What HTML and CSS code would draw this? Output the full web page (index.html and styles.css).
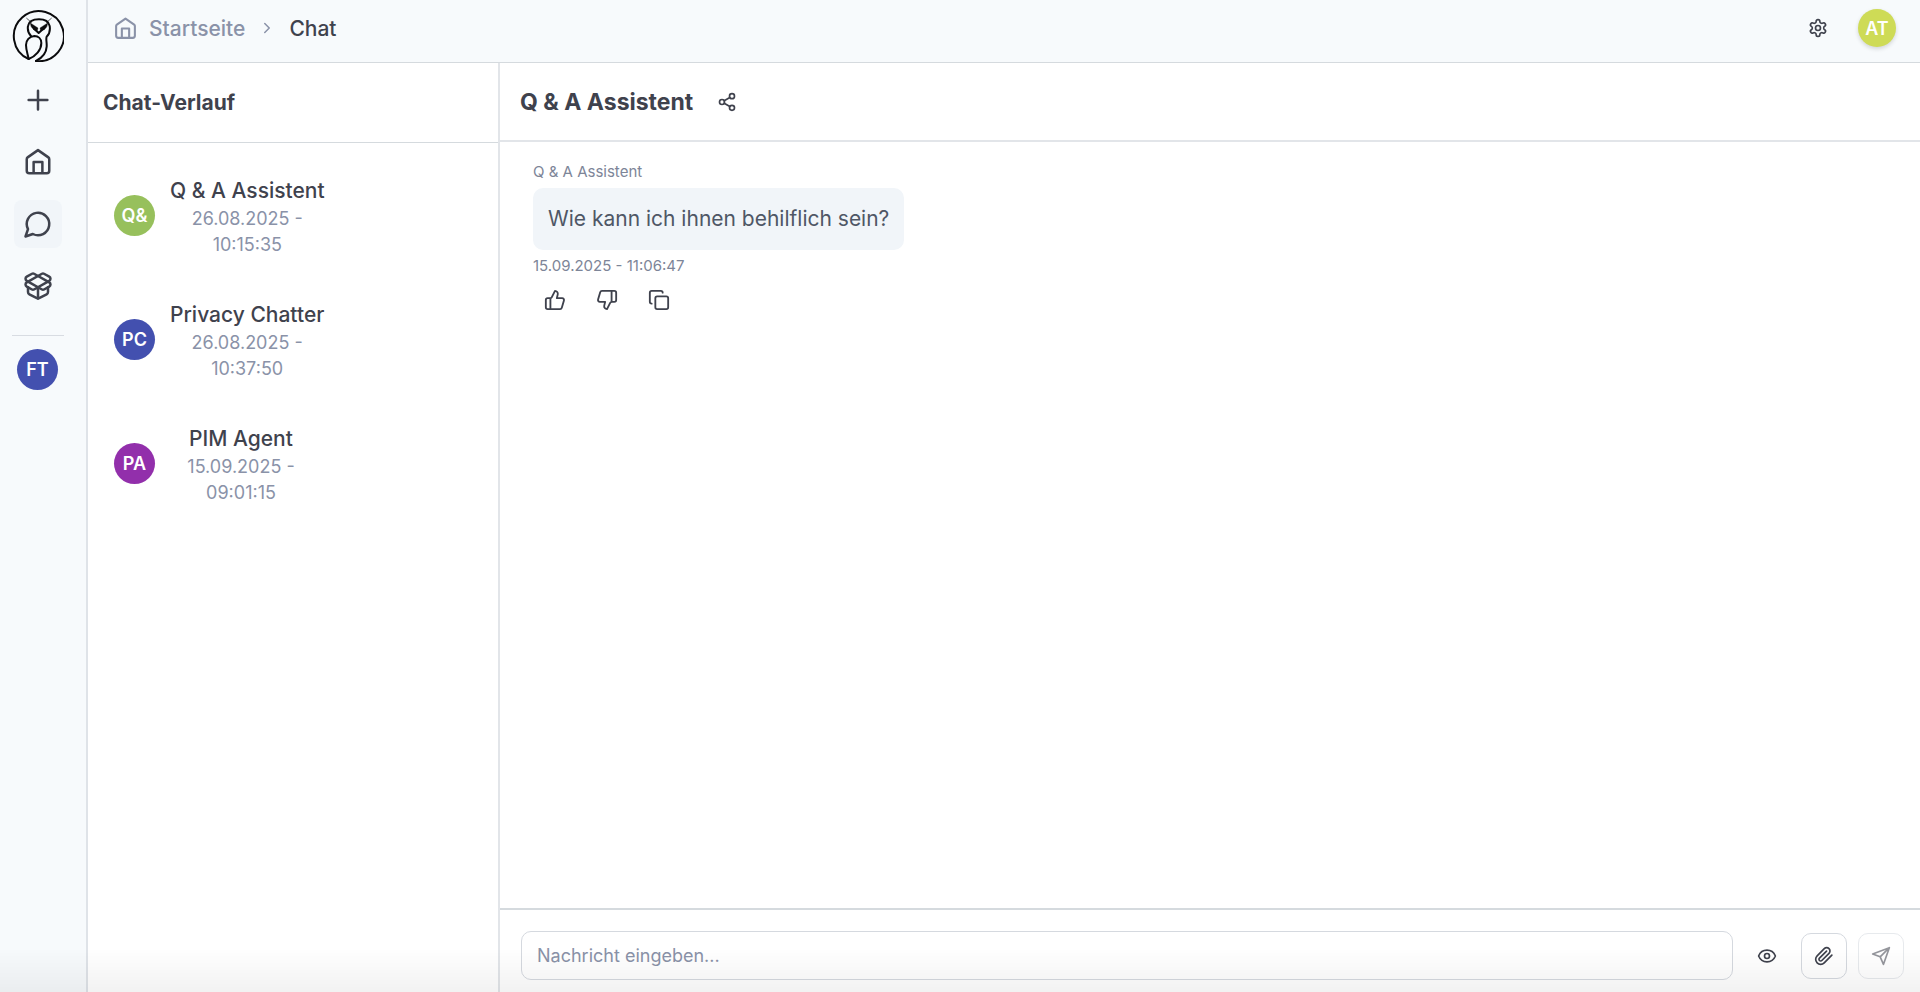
FILE: index.html
```html
<!DOCTYPE html>
<html lang="de">
<head>
    <meta charset="UTF-8">
    <meta name="viewport" content="width=device-width, initial-scale=1.0">
    <title>Chat</title>
    <link rel="stylesheet" href="styles.css">
</head>
<body>
    <nav class="sidebar">
        <a href="#" class="logo" aria-label="Start">
            <svg viewBox="0 0 156 156" fill="none" stroke="#0b0b0d" stroke-width="6" stroke-linecap="round" stroke-linejoin="round">
                <path d="M50 147A75 75 0 1 1 72 153"/>
                <path d="M72 153C92 143 103 128 104 110C105 97 101 88 104 80C112 72 115 60 113 48C110 34 98 28 81 28C64 28 50 34 48 48C46 60 49 70 57 78"/>
                <path d="M67 78C52 79 42 91 42 105C42 121 48 134 50 147C71 139 88 120 88 99C88 86 79 78 67 78Z"/>
                <path d="M66 56L80 69L94 56"/>
                <path d="M44 25L58 37M118 25L104 37" stroke-width="2"/>
                <path d="M54 38L78 54L76 62L65 59L58 51ZM108 38L84 54L86 62L97 59L104 51Z" fill="#0b0b0d" stroke-width="1"/>
            </svg>
        </a>
        <div class="menu">
            <button class="menu-button" aria-label="Neu">
                <svg class="icon" viewBox="0 0 24 24"><path d="M4.500 12h15M12 4.500v15"/></svg>
            </button>
            <button class="menu-button" aria-label="Startseite">
                <svg class="icon" viewBox="0 0 24 24"><path d="M12 2.500L3.700 8.300a1.700 1.700 0 0 0-.7 1.400V19a2 2 0 0 0 2 2h14a2 2 0 0 0 2-2V9.700a1.700 1.700 0 0 0-.7-1.400zM8.500 21v-9h7v9"/></svg>
            </button>
            <button class="menu-button active" aria-label="Chat">
                <svg class="icon" viewBox="0 0 24 24"><path d="M7.900 20A9 9 0 1 0 4 16.100L2 22Z"/></svg>
            </button>
            <button class="menu-button" aria-label="Pakete">
                <svg class="icon" viewBox="0 0 24 24"><path d="M12 22v-9M15.170 2.210a1.670 1.670 0 0 1 1.630 0L21 4.570a1.930 1.930 0 0 1 0 3.360L8.820 14.790a1.655 1.655 0 0 1-1.640 0L3 12.430a1.930 1.930 0 0 1 0-3.360z"/><path d="M20 13v3.870a2.060 2.060 0 0 1-1.110 1.830l-6 3.080a1.930 1.930 0 0 1-1.780 0l-6-3.080A2.060 2.060 0 0 1 4 16.870V13"/><path d="M21 12.430a1.930 1.930 0 0 0 0-3.360L8.830 2.200a1.640 1.640 0 0 0-1.630 0L3 4.570a1.930 1.930 0 0 0 0 3.360l12.180 6.860a1.636 1.636 0 0 0 1.630 0z"/></svg>
            </button>
        </div>
        <hr class="divider">
        <button class="avatar indigo">FT</button>
    </nav>

    <div class="page">
        <header class="topbar">
            <div class="breadcrumb">
                <a href="#" class="crumb">
                    <svg class="icon" viewBox="0 0 24 24"><path d="M12 2.500L3.700 8.300a1.700 1.700 0 0 0-.7 1.400V19a2 2 0 0 0 2 2h14a2 2 0 0 0 2-2V9.700a1.700 1.700 0 0 0-.7-1.400zM8.500 21v-9h7v9"/></svg>
                    <span>Startseite</span>
                </a>
                <svg class="icon chevron" viewBox="0 0 24 24"><path d="M9 18l6-6-6-6"/></svg>
                <span class="current">Chat</span>
            </div>
            <div class="account">
                <button class="icon-button" aria-label="Einstellungen">
                    <svg class="icon" viewBox="0 0 24 24"><path d="M12.220 2h-.44a2 2 0 0 0-2 2v.18a2 2 0 0 1-1 1.730l-.43.25a2 2 0 0 1-2 0l-.15-.08a2 2 0 0 0-2.730.73l-.22.38a2 2 0 0 0 .73 2.730l.15.1a2 2 0 0 1 1 1.720v.51a2 2 0 0 1-1 1.740l-.15.09a2 2 0 0 0-.73 2.730l.22.38a2 2 0 0 0 2.730.73l.15-.08a2 2 0 0 1 2 0l.43.25a2 2 0 0 1 1 1.730V20a2 2 0 0 0 2 2h.44a2 2 0 0 0 2-2v-.18a2 2 0 0 1 1-1.730l.43-.25a2 2 0 0 1 2 0l.15.08a2 2 0 0 0 2.730-.73l.22-.39a2 2 0 0 0-.73-2.730l-.15-.08a2 2 0 0 1-1-1.740v-.5a2 2 0 0 1 1-1.740l.15-.09a2 2 0 0 0 .73-2.730l-.22-.38a2 2 0 0 0-2.730-.73l-.15.08a2 2 0 0 1-2 0l-.43-.25a2 2 0 0 1-1-1.730V4a2 2 0 0 0-2-2z"/><circle cx="12" cy="12" r="3"/></svg>
                </button>
                <button class="avatar lime">AT</button>
            </div>
        </header>

        <div class="content">
            <aside class="history">
                <h2 class="history-title">Chat-Verlauf</h2>
                <div class="history-list">
                    <button class="history-item">
                        <span class="avatar green">Q&amp;</span>
                        <span class="history-text">
                            <span class="name">Q &amp; A Assistent</span>
                            <span class="date">26.08.2025 - 10:15:35</span>
                        </span>
                    </button>
                    <button class="history-item">
                        <span class="avatar indigo">PC</span>
                        <span class="history-text">
                            <span class="name">Privacy Chatter</span>
                            <span class="date">26.08.2025 - 10:37:50</span>
                        </span>
                    </button>
                    <button class="history-item">
                        <span class="avatar purple">PA</span>
                        <span class="history-text">
                            <span class="name">PIM Agent</span>
                            <span class="date">15.09.2025 - 09:01:15</span>
                        </span>
                    </button>
                </div>
            </aside>

            <main class="chat">
                <div class="chat-header">
                    <h1>Q &amp; A Assistent</h1>
                    <button class="icon-button" aria-label="Teilen">
                        <svg class="icon" viewBox="0 0 24 24"><circle cx="18" cy="5" r="3"/><circle cx="6" cy="12" r="3"/><circle cx="18" cy="19" r="3"/><path d="M8.590 13.510l6.830 3.980M15.410 6.510l-6.820 3.980"/></svg>
                    </button>
                </div>

                <div class="messages">
                    <div class="message">
                        <span class="meta">Q &amp; A Assistent</span>
                        <p class="bubble">Wie kann ich ihnen behilflich sein?</p>
                        <span class="meta">15.09.2025 - 11:06:47</span>
                        <div class="actions">
                            <button class="icon-button" aria-label="Gefällt mir">
                                <svg class="icon" viewBox="0 0 24 24"><path d="M7 10v12M15 5.880L14 10h5.830a2 2 0 0 1 1.920 2.560l-2.330 8A2 2 0 0 1 17.500 22H4a2 2 0 0 1-2-2v-8a2 2 0 0 1 2-2h2.760a2 2 0 0 0 1.790-1.110L12 2a3.130 3.130 0 0 1 3 3.880Z"/></svg>
                            </button>
                            <button class="icon-button" aria-label="Gefällt mir nicht">
                                <svg class="icon" viewBox="0 0 24 24"><path d="M17 14V2M9 18.120L10 14H4.170a2 2 0 0 1-1.920-2.560l2.330-8A2 2 0 0 1 6.500 2H20a2 2 0 0 1 2 2v8a2 2 0 0 1-2 2h-2.760a2 2 0 0 0-1.790 1.110L12 22a3.130 3.130 0 0 1-3-3.880Z"/></svg>
                            </button>
                            <button class="icon-button" aria-label="Kopieren">
                                <svg class="icon" viewBox="0 0 24 24"><rect x="8" y="8" width="14" height="14" rx="2"/><path d="M4 16c-1.100 0-2-.9-2-2V4c0-1.100.9-2 2-2h10c1.100 0 2 .9 2 2"/></svg>
                            </button>
                        </div>
                    </div>
                </div>

                <form class="composer">
                    <input type="text" class="message-input" placeholder="Nachricht eingeben..." aria-label="Nachricht eingeben">
                    <button type="button" class="tool-button plain" aria-label="Vorschau">
                        <svg class="icon" viewBox="0 0 24 24"><path d="M2.060 12.350a1 1 0 0 1 0-.7 10.750 10.750 0 0 1 19.880 0 1 1 0 0 1 0 .7 10.750 10.750 0 0 1-19.880 0"/><circle cx="12" cy="12" r="3"/></svg>
                    </button>
                    <button type="button" class="tool-button" aria-label="Datei anhängen">
                        <svg class="icon" viewBox="0 0 24 24"><path d="M21.440 11.050l-9.190 9.190a6 6 0 0 1-8.490-8.490l8.570-8.570A4 4 0 1 1 18 8.840l-8.590 8.570a2 2 0 0 1-2.830-2.830l8.490-8.480"/></svg>
                    </button>
                    <button type="submit" class="tool-button" aria-label="Senden" disabled>
                        <svg class="icon" viewBox="0 0 24 24"><path d="M22 2L2 9.500l9 3.500 4 9zM22 2L11 13"/></svg>
                    </button>
                </form>
            </main>
        </div>
    </div>
</body>
</html>
```
FILE: styles.css
```css
* {
    box-sizing: border-box;
}
body {
    margin: 0;
    display: flex;
    height: 100vh;
    overflow: hidden;
    background: #fff;
    color: #3f424d;
    font-family: Inter, "Liberation Sans", sans-serif;
    font-size: 21px;
}
/* soft shade along the bottom edge of the window */
body::after {
    content: "";
    position: fixed;
    left: 0;
    right: 0;
    bottom: 0;
    height: 44px;
    background: linear-gradient(rgba(0, 0, 0, 0), rgba(0, 0, 0, 0.05));
    pointer-events: none;
}
button {
    border: none;
    padding: 0;
    background: none;
    color: inherit;
    font: inherit;
    cursor: pointer;
}
a {
    color: inherit;
    text-decoration: none;
}
.icon {
    display: block;
    width: 22px;
    height: 22px;
    fill: none;
    stroke: currentColor;
    stroke-width: 2;
    stroke-linecap: round;
    stroke-linejoin: round;
}
.avatar {
    display: flex;
    align-items: center;
    justify-content: center;
    flex: none;
    width: 41px;
    height: 41px;
    border-radius: 50%;
    color: #fff;
    font-size: 18px;
    font-weight: 600;
}
.indigo {
    background: #4350af;
}
.green {
    background: #97c05c;
}
.purple {
    background: #922fab;
}
.lime {
    width: 38px;
    height: 38px;
    background: #cedb56;
    box-shadow: 0 2px 4px rgba(0, 0, 0, 0.15);
}

/* sidebar */
.sidebar {
    display: flex;
    flex-direction: column;
    align-items: center;
    flex: none;
    width: 88px;
    padding: 10px 11px 0 0;
    background: #f7fafc;
    border-right: 2px solid #dfe3e8;
}
.logo svg {
    display: block;
    width: 52px;
    height: 52px;
}
.menu {
    display: flex;
    flex-direction: column;
    gap: 14px;
    margin-top: 14px;
}
.menu-button {
    display: flex;
    align-items: center;
    justify-content: center;
    width: 48px;
    height: 48px;
    border-radius: 8px;
}
.menu-button.active {
    background: #f1f5f9;
}
.menu-button .icon {
    width: 30px;
    height: 30px;
}
.divider {
    width: 52px;
    margin: 25px 0 13px;
    border: none;
    border-top: 1px solid #d8dce2;
}

/* top bar */
.page {
    display: flex;
    flex-direction: column;
    flex: 1;
    min-width: 0;
}
.topbar {
    display: flex;
    align-items: center;
    justify-content: space-between;
    height: 63px;
    padding: 0 24px 6px 25px;
    background: #f7fafc;
    border-bottom: 1px solid #d5dade;
}
.breadcrumb,
.crumb {
    display: flex;
    align-items: center;
    font-weight: 500;
}
.breadcrumb {
    gap: 13px;
}
.crumb {
    gap: 11px;
    color: #8a92a8;
}
.crumb .icon {
    width: 25px;
    height: 25px;
}
.breadcrumb .chevron {
    width: 18px;
    height: 18px;
    color: #8a92a8;
}
.account {
    display: flex;
    align-items: center;
    gap: 20px;
}
.icon-button {
    display: flex;
    align-items: center;
    justify-content: center;
    width: 40px;
    height: 40px;
}
.account .icon,
.chat-header .icon {
    width: 20px;
    height: 20px;
}

/* chat history */
.content {
    display: flex;
    flex: 1;
    min-height: 0;
}
.history {
    flex: none;
    width: 412px;
    border-right: 2px solid #e2e5e9;
}
.history-title {
    margin: 0;
    padding: 27px 15px 26px;
    border-bottom: 1px solid #d5dade;
    font-size: 21px;
    line-height: 26px;
    font-weight: 700;
}
.history-list {
    display: flex;
    flex-direction: column;
    align-items: flex-start;
    gap: 20px;
    padding: 20px 14px;
}
.history-item {
    display: flex;
    align-items: center;
    gap: 15px;
    height: 104px;
    padding: 0 12px;
}
.history-text {
    width: min-content;
    min-width: 142px;
    padding-top: 5px;
}
.name,
.date {
    display: block;
    line-height: 26px;
}
.name {
    margin-bottom: 2px;
    font-weight: 500;
    white-space: nowrap;
}
.date {
    padding: 0 16px;
    color: #8a92a8;
    font-size: 18px;
}

/* conversation */
.chat {
    display: flex;
    flex-direction: column;
    flex: 1;
    min-width: 0;
}
.chat-header {
    display: flex;
    align-items: center;
    gap: 14px;
    height: 79px;
    padding: 0 20px;
    border-bottom: 2px solid #e2e5e9;
}
.chat-header h1 {
    margin: 0;
    font-size: 23px;
    font-weight: 700;
}
.messages {
    flex: 1;
    padding: 20px 33px;
}
.message {
    display: flex;
    flex-direction: column;
    align-items: flex-start;
}
.meta {
    color: #7d8598;
    font-size: 15px;
    line-height: 20px;
}
.bubble {
    margin: 6px 0;
    padding: 16px 15px;
    border-radius: 10px;
    background: #f1f5f9;
    color: #4f5766;
    font-size: 21px;
    line-height: 30px;
}
.actions {
    display: flex;
    gap: 12px;
    margin: 4px 0 0 2px;
}
.composer {
    display: flex;
    align-items: center;
    gap: 11px;
    padding: 21px 16px 12px 21px;
    border-top: 2px solid #d5dade;
}
.message-input {
    flex: 1;
    min-width: 0;
    height: 49px;
    padding: 0 15px;
    border: 1px solid #d5d9df;
    border-radius: 10px;
    background: #fff;
    color: #3f424d;
    font-family: inherit;
    font-size: 18px;
    outline: none;
}
.message-input::placeholder {
    color: #8a92a8;
}
.tool-button {
    display: flex;
    align-items: center;
    justify-content: center;
    width: 46px;
    height: 46px;
    border: 1px solid #d5d9df;
    border-radius: 10px;
    background: #fff;
}
.tool-button .icon {
    width: 20px;
    height: 20px;
}
.tool-button.plain {
    border-color: transparent;
    background: none;
}
.tool-button:disabled {
    opacity: 0.55;
}
```
